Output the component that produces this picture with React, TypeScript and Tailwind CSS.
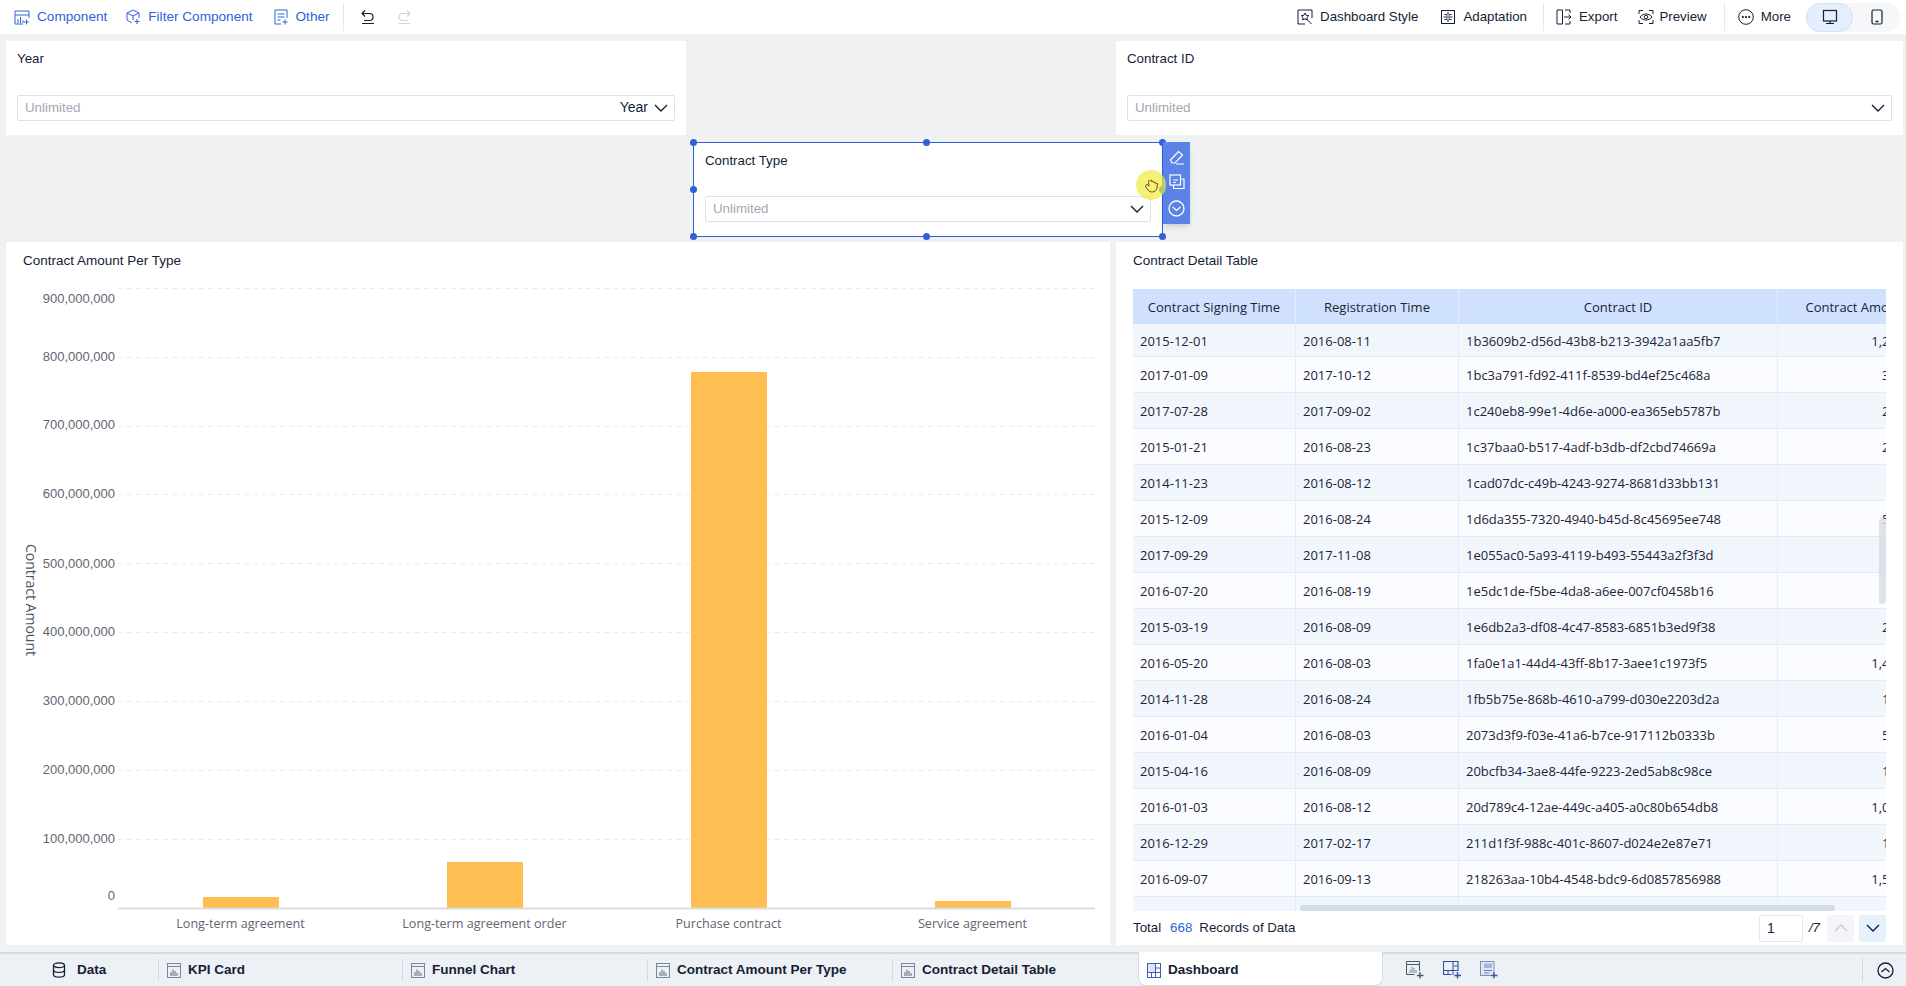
import React from 'react';

const SANS = "font-['Liberation_Sans',Arial,sans-serif]";
const CHART_FONT = "'Open Sans', sans-serif";

type IconProps = { className?: string };

const Svg: React.FC<{ className?: string; size?: number; children: React.ReactNode }> = ({ className, size = 16, children }) => (
  <svg width={size} height={size} viewBox="0 0 16 16" fill="none" stroke="currentColor" strokeWidth="1" className={`shrink-0 ${className ?? ''}`}>
    {children}
  </svg>
);

const ComponentIcon = ({ className }: IconProps) => (
  <Svg className={className}>
    <path d="M15 9V2H1v13h8M1 6h14M4 14v-4M6.500 14V8M9 14v-3M12.500 10.500v5M10 13h5" />
  </Svg>
);
const FilterIcon = ({ className }: IconProps) => (
  <Svg className={className}>
    <path d="M8 1l6 3v5M8 1L2 4v7l5 3M2 4l6 3 6-3M8 7v4M12 10v5M9.500 12.500h5" />
  </Svg>
);
const OtherIcon = ({ className }: IconProps) => (
  <Svg className={className}>
    <path d="M8 15H2V1h12v8M4.500 5h7M4.500 8h7M4.500 11h3M12 10.500v5M9.500 13h5" />
  </Svg>
);
const UndoIcon = ({ className }: IconProps) => (
  <Svg className={className}>
    <path d="M5 1.500L2 4.500l3 3M2 4.500h7.500a3.500 3.500 0 0 1 0 7H4M2 14.500h12" strokeWidth="1.200" />
  </Svg>
);
const RedoIcon = ({ className }: IconProps) => (
  <Svg className={className}>
    <path d="M11 1.500l3 3-3 3M14 4.500H6.500a3.500 3.500 0 0 0 0 7H12M2 14.500h12" strokeWidth="1.200" />
  </Svg>
);
const StyleIcon = ({ className }: IconProps) => (
  <Svg className={className}>
    <path d="M8 15H1V1h14v8M8 4l1.200 2.300 2.600.400-1.900 1.800.5 2.500L8 9.800l-2.400 1.200.5-2.500L4.200 6.700l2.600-.400zM10.500 11l4 4" />
  </Svg>
);
const AdaptIcon = ({ className }: IconProps) => (
  <Svg className={className}>
    <rect x="1.500" y="1.500" width="13" height="13" />
    <path d="M8 3v3.500M8 9.500V13M3.500 8h9M4.500 5.500h2v1M9.500 6.500v-1h2M4.500 10.500h2v-1M9.500 9.500v1h2" />
  </Svg>
);
const ExportIcon = ({ className }: IconProps) => (
  <Svg className={className}>
    <path d="M6.500 1H1v14h5.500V1zM9 1h5v3M9 15h5v-3M8 8h7M12.500 5.500L15 8l-2.500 2.500" />
  </Svg>
);
const PreviewIcon = ({ className }: IconProps) => (
  <Svg className={className}>
    <path d="M1 5V1.500h4M11 1.500h4V5M1 11v3.500h4M11 14.500h4V11M2 8c3-4 9-4 12 0-3 4-9 4-12 0z" />
    <circle cx="8" cy="8" r="1.800" />
  </Svg>
);
const MoreIcon = ({ className }: IconProps) => (
  <Svg className={className}>
    <circle cx="8" cy="8" r="7.300" />
    <circle cx="4.800" cy="8" r=".7" fill="currentColor" />
    <circle cx="8" cy="8" r=".7" fill="currentColor" />
    <circle cx="11.200" cy="8" r=".7" fill="currentColor" />
  </Svg>
);
const MonitorIcon = ({ className }: IconProps) => (
  <Svg className={className}>
    <rect x="1.500" y="1.500" width="13" height="10.500" strokeWidth="1.200" />
    <path d="M8 12v2.500M4 14.500h8" strokeWidth="1.200" />
  </Svg>
);
const PhoneIcon = ({ className }: IconProps) => (
  <Svg className={className}>
    <rect x="3" y="1" width="10" height="14" rx="1.500" strokeWidth="1.200" />
    <path d="M6.500 12.500h3" strokeWidth="1.500" />
  </Svg>
);
const Chevron = ({ className, up }: IconProps & { up?: boolean }) => (
  <svg width="14" height="8" viewBox="0 0 14 8" fill="none" stroke="currentColor" strokeWidth="1.400" className={`shrink-0 ${className ?? ''}`}>
    <path d={up ? 'M1 7l6-6 6 6' : 'M1 1l6 6 6-6'} />
  </svg>
);
const DataIcon = ({ className }: IconProps) => (
  <Svg className={className}>
    <ellipse cx="8" cy="3.200" rx="5.500" ry="2.400" strokeWidth="1.300" />
    <path d="M2.500 3.200v9.600c0 1.300 2.500 2.400 5.500 2.400s5.500-1.100 5.500-2.400V3.200M2.500 8c0 1.300 2.500 2.400 5.500 2.400s5.500-1.100 5.500-2.400" strokeWidth="1.300" />
  </Svg>
);
const TabChartIcon = () => (
  <svg width="14" height="15" viewBox="0 0 14 15" fill="none" className="shrink-0">
    <rect x=".5" y=".5" width="13" height="14" stroke="#7b8698" />
    <path d="M1 3.500h12" stroke="#7b8698" />
    <path d="M4 13V9M6 13V6.500M8 13V8M10 13v-3" stroke="#5d6b82" />
  </svg>
);
const TabDashIcon = () => (
  <svg width="14" height="15" viewBox="0 0 14 15" fill="none" className="shrink-0">
    <rect x=".5" y=".5" width="13" height="14" stroke="#3f5fb4" />
    <rect x="1" y="1" width="7" height="8" fill="#dbe5f9" />
    <path d="M8.500 1v13M1 9.500h12M9 5h4M4.500 10v4" stroke="#3f5fb4" />
  </svg>
);

const AddChartIcon = () => (
  <svg width="18" height="18" viewBox="0 0 18 18" fill="none" className="shrink-0">
    <path d="M13.500 10V.5H.5v13h8" stroke="#4d5a6c" />
    <path d="M1 3.500h12" stroke="#4d5a6c" />
    <path d="M4 12V9M6 12V6M8 12V7M10 12V9" stroke="#93a0b3" strokeWidth="1.300" />
    <path d="M14 11v6.500M11 14.500h6.500" stroke="#4d5a6c" strokeWidth="1.400" />
  </svg>
);
const AddDashIcon = () => (
  <svg width="18" height="18" viewBox="0 0 18 18" fill="none" className="shrink-0">
    <path d="M15 10V.5H.5v13h8" stroke="#2f4ea8" strokeWidth="1.100" />
    <path d="M10 1v13M1 9.500h14M10.500 5h4M5 10v4" stroke="#2f4ea8" />
    <path d="M14.500 11v6.500M11.500 14.500H18" stroke="#2f4ea8" strokeWidth="1.400" />
  </svg>
);
const AddReportIcon = () => (
  <svg width="18" height="18" viewBox="0 0 18 18" fill="none" className="shrink-0">
    <rect x=".5" y=".5" width="13.500" height="14" stroke="#7d8ea8" fill="#dfe6f1" />
    <rect x="4" y="2.500" width="8" height="4.500" fill="#9db6e6" />
    <path d="M4 9.500h8M4 12h5" stroke="#5a7ec8" />
    <path d="M14 11.500v6M11 14.500h6.500" stroke="#3a5aa8" strokeWidth="1.400" />
  </svg>
);

const ToolItem: React.FC<{ icon: React.ReactNode; label: string; className?: string }> = ({ icon, label, className }) => (
  <div className={`flex items-center gap-[7px] ${className ?? ''}`}>
    {icon}
    <span>{label}</span>
  </div>
);

const TopBar = () => (
  <div className={`flex h-[34px] shrink-0 items-center justify-between bg-white ${SANS}`}>
    <div className="flex items-center pl-[14px] text-[13.600px] text-[#2f62d8]">
      <ToolItem icon={<ComponentIcon />} label="Component" />
      <ToolItem icon={<FilterIcon />} label="Filter Component" className="ml-[18px]" />
      <ToolItem icon={<OtherIcon />} label="Other" className="ml-[20px]" />
      <div className="ml-[13px] h-[28px] w-px bg-[#e6e8ec]" />
      <UndoIcon className="ml-[16px] text-[#141e36]" />
      <RedoIcon className="ml-[20px] text-[#cfd6e0]" />
    </div>
    <div className="flex items-center pr-[6px] text-[13.300px] text-[#141e36]">
      <ToolItem icon={<StyleIcon />} label="Dashboard Style" />
      <ToolItem icon={<AdaptIcon />} label="Adaptation" className="ml-[22px]" />
      <div className="ml-[16px] h-[28px] w-px bg-[#e6e8ec]" />
      <ToolItem icon={<ExportIcon />} label="Export" className="ml-[12px]" />
      <div className="ml-[21px] flex items-center gap-[5px]">
        <PreviewIcon />
        <span>Preview</span>
      </div>
      <div className="ml-[17px] h-[28px] w-px bg-[#e6e8ec]" />
      <ToolItem icon={<MoreIcon />} label="More" className="ml-[13px]" />
      <div className="ml-[15px] flex h-[29px] w-[94px] items-center rounded-full bg-[#f6f7f9]">
        <div className="flex h-[29px] w-[47px] items-center justify-center rounded-full border border-[#cfe0fb] bg-[#e4eefd]">
          <MonitorIcon />
        </div>
        <div className="flex w-[47px] items-center justify-center">
          <PhoneIcon />
        </div>
      </div>
    </div>
  </div>
);

const SelectBox: React.FC<{ suffix?: string }> = ({ suffix }) => (
  <div className="flex h-[26px] items-center justify-between rounded-[2px] border border-[#dfe1e6] bg-white pb-[1px] pl-[7px] pr-[6px]">
    <span className="text-[13.300px] text-[#a3a8b3]">Unlimited</span>
    <div className="flex items-center gap-[6px] text-[14px] text-[#141e36]">
      {suffix && <span>{suffix}</span>}
      <Chevron />
    </div>
  </div>
);

const FilterCard: React.FC<{ title: string; suffix?: string }> = ({ title, suffix }) => (
  <div className="flex h-full flex-col justify-between bg-white pb-[14px] pl-[11px] pr-[11px] pt-[10px]">
    <div className="text-[13.300px] leading-[16px] text-[#141e36]">{title}</div>
    <SelectBox suffix={suffix} />
  </div>
);

const handles = [
  'left-[-4px] top-[-4px]',
  'left-[50%] top-[-4px] ml-[-5px]',
  'right-[-4px] top-[-4px]',
  'left-[-4px] top-[50%] mt-[-4px]',
  'right-[-4px] top-[50%] mt-[-4px]',
  'left-[-4px] bottom-[-4px]',
  'left-[50%] bottom-[-4px] ml-[-5px]',
  'right-[-4px] bottom-[-4px]',
];

const SelectedFilter = () => (
  <div className="relative ml-[693px] h-[95px] w-[470px] border border-[#2f62d8]">
    <FilterCard title="Contract Type" />
    {handles.map(h => (
      <span key={h} className={`absolute h-[7px] w-[7px] rounded-full bg-[#2f62d8] ${h}`} />
    ))}
    <div className="absolute left-[469px] top-[-1px] flex h-[82px] w-[27px] flex-col items-center justify-around bg-[#5b82e6] py-[2px] text-white shadow-md">
      <svg width="16" height="16" viewBox="0 0 16 16" fill="none" stroke="currentColor" strokeWidth="1.200">
        <path d="M1.500 11l8-8.500L13.500 6l-7.500 8H3zM7 15h8" />
      </svg>
      <svg width="16" height="16" viewBox="0 0 16 16" fill="none" stroke="currentColor" strokeWidth="1.200">
        <rect x="1" y="1" width="10.500" height="10" />
        <path d="M4.500 11v3.500h10.500V5h-3.500M4 6h5M4 8.500h3" />
      </svg>
      <svg width="17" height="17" viewBox="0 0 17 17" fill="none" stroke="currentColor" strokeWidth="1.300">
        <circle cx="8.500" cy="8.500" r="7.500" />
        <path d="M4.500 7l4 3.500 4-3.500" />
      </svg>
    </div>
    {/* mouse pointer highlight from the recording */}
    <div className="absolute left-[442px] top-[27px] flex h-[30px] w-[30px] items-center justify-center rounded-full bg-[#f0ec3c]/70">
      <svg width="15" height="15" viewBox="0 0 15 15" fill="none" stroke="#7c2d12" strokeWidth="0.900">
        <path d="M2 7c-1 1 0 2.500 2 5 1 1.500 2.500 2 4.500 2s4-1.500 4.500-4l.5-4c0-1-1-1-1.500 0-.2-2-1.500-2.300-2-1-.2-2-1.700-2.300-2.200-1C8.300 2 7 1.800 6.500 3c-.7-1-2-.7-2 .5L5 8 3.500 6.800C3 6.400 2.400 6.500 2 7z" />
      </svg>
    </div>
  </div>
);

const bars = [
  { x: 203, top: 897, label: 'Long-term agreement', cx: 240.500 },
  { x: 447, top: 862, label: 'Long-term agreement order', cx: 484.500 },
  { x: 691, top: 372, label: 'Purchase contract', cx: 728.500 },
  { x: 935, top: 901, label: 'Service agreement', cx: 972.500 },
];

const yTicks = [
  { label: '900,000,000', line: 288, text: 298 },
  { label: '800,000,000', line: 357, text: 356 },
  { label: '700,000,000', line: 426, text: 424 },
  { label: '600,000,000', line: 494, text: 493 },
  { label: '500,000,000', line: 563, text: 563 },
  { label: '400,000,000', line: 632, text: 631 },
  { label: '300,000,000', line: 701, text: 700 },
  { label: '200,000,000', line: 770, text: 769 },
  { label: '100,000,000', line: 839, text: 838 },
  { label: '0', line: 908, text: 895 },
];

// coordinates below are page coordinates, the svg sits at (6,242)
const BarChart = () => (
  <svg width="1104" height="703" viewBox="6 242 1104 703" className="absolute left-0 top-0" fontFamily="'Liberation Sans', Arial, sans-serif">
    {yTicks.slice(0, 9).map(t => (
      <line key={t.label} x1="118" x2="1096" y1={t.line + 0.5} y2={t.line + 0.5} stroke="#ececec" strokeDasharray="5 4" />
    ))}
    {yTicks.map(t => (
      <text key={t.label} x="115" y={t.text + 4.500} textAnchor="end" fontSize="13" fill="#5f6672">{t.label}</text>
    ))}
    <text transform="translate(30 600) rotate(90)" textAnchor="middle" dominantBaseline="middle" fontSize="14" fill="#4b5563" fontFamily={CHART_FONT}>Contract Amount</text>
    {bars.map(b => (
      <rect key={b.label} x={b.x} y={b.top} width="76" height={908 - b.top} fill="#ffbe51" />
    ))}
    <line x1="118" x2="1095" y1="908.500" y2="908.500" stroke="#dcdcdc" strokeWidth="2" />
    {bars.map(b => (
      <text key={b.label} x={b.cx} y="927.500" textAnchor="middle" fontSize="12.600" fill="#5f6672" fontFamily={CHART_FONT}>{b.label}</text>
    ))}
  </svg>
);

const rows = [
  ['2015-12-01', '2016-08-11', '1b3609b2-d56d-43b8-b213-3942a1aa5fb7', '1,253,160'],
  ['2017-01-09', '2017-10-12', '1bc3a791-fd92-411f-8539-bd4ef25c468a', '351,200'],
  ['2017-07-28', '2017-09-02', '1c240eb8-99e1-4d6e-a000-ea365eb5787b', '268,400'],
  ['2015-01-21', '2016-08-23', '1c37baa0-b517-4adf-b3db-df2cbd74669a', '245,900'],
  ['2014-11-23', '2016-08-12', '1cad07dc-c49b-4243-9274-8681d33bb131', '67,300'],
  ['2015-12-09', '2016-08-24', '1d6da355-7320-4940-b45d-8c45695ee748', '512,000'],
  ['2017-09-29', '2017-11-08', '1e055ac0-5a93-4119-b493-55443a2f3f3d', '48,500'],
  ['2016-07-20', '2016-08-19', '1e5dc1de-f5be-4da8-a6ee-007cf0458b16', '72,100'],
  ['2015-03-19', '2016-08-09', '1e6db2a3-df08-4c47-8583-6851b3ed9f38', '230,600'],
  ['2016-05-20', '2016-08-03', '1fa0e1a1-44d4-43ff-8b17-3aee1c1973f5', '1,430,000'],
  ['2014-11-28', '2016-08-24', '1fb5b75e-868b-4610-a799-d030e2203d2a', '125,700'],
  ['2016-01-04', '2016-08-03', '2073d3f9-f03e-41a6-b7ce-917112b0333b', '540,200'],
  ['2015-04-16', '2016-08-09', '20bcfb34-3ae8-44fe-9223-2ed5ab8c98ce', '118,400'],
  ['2016-01-03', '2016-08-12', '20d789c4-12ae-449c-a405-a0c80b654db8', '1,060,000'],
  ['2016-12-29', '2017-02-17', '211d1f3f-988c-401c-8607-d024e2e87e71', '134,800'],
  ['2016-09-07', '2016-09-13', '218263aa-10b4-4548-bdc9-6d0857856988', '1,520,000'],
];

const colWidths = ['w-[163px]', 'w-[163px]', 'w-[319px]', 'w-[160px]'];

const DetailTable = () => (
  <div className="relative h-[622px] w-[753px] overflow-hidden font-['Open_Sans',sans-serif] text-[13px] text-[#1c2438]">
    <div className="flex h-[35px] w-[805px] bg-[#cfe1fc]">
      {['Contract Signing Time', 'Registration Time', 'Contract ID', 'Contract Amount'].map((h, i) => (
        <div key={h} className={`${colWidths[i]} flex shrink-0 items-center justify-center border-r border-[#e3edfc] pt-[2px]`}>{h}</div>
      ))}
    </div>
    {rows.map((r, i) => (
      <div key={r[2]} className={`flex w-[805px] border-b border-[#dfeafb] ${i === 0 ? 'h-[33px]' : 'h-[36px]'} ${i % 2 === 0 ? 'bg-[#f1f6fd]' : 'bg-[#fbfcff]'}`}>
        {r.map((c, j) => (
          <div key={j} className={`${colWidths[j]} flex shrink-0 items-center whitespace-nowrap border-r border-[#e3edfc] px-[7px] pt-[3px] ${j === 3 ? 'justify-end' : ''}`}>{c}</div>
        ))}
      </div>
    ))}
    <div className="flex h-[36px] w-[805px] bg-[#f1f6fd]">
      {colWidths.map(w => <div key={w} className={`${w} shrink-0 border-r border-[#e3edfc]`} />)}
    </div>
    {/* scrollbars */}
    <div className="absolute bottom-0 left-[167px] h-[6px] w-[535px] rounded-full bg-[#d3dbe5]" />
    <div className="absolute right-0 top-[229px] h-[86px] w-[7px] rounded-full bg-[#d7dbe3]/80" />
  </div>
);

const Pager = () => (
  <div className={`flex h-[34px] items-center justify-between pr-[17px] ${SANS} text-[13.300px] text-[#141e36]`}>
    <div className="flex">
      <span>Total</span>
      <span className="ml-[9px] text-[#2f62d8]">668</span>
      <span className="ml-[7px]">Records of Data</span>
    </div>
    <div className="flex items-center">
      <div className="flex h-[27px] w-[44px] items-center rounded-[2px] border border-[#dfeafb] pl-[7px] text-[14px]">1</div>
      <span className="ml-[6px] italic">/7</span>
      <div className="ml-[7px] flex h-[27px] w-[27px] items-center justify-center rounded-[2px] bg-[#f3f5f9] text-[#c5ccd8]"><Chevron up /></div>
      <div className="ml-[5px] flex h-[27px] w-[27px] items-center justify-center rounded-[2px] bg-[#e6f1fd]"><Chevron /></div>
    </div>
  </div>
);

const tabs = [
  { label: 'KPI Card', width: 'w-[244px]' },
  { label: 'Funnel Chart', width: 'w-[245px]' },
  { label: 'Contract Amount Per Type', width: 'w-[245px]' },
  { label: 'Contract Detail Table', width: 'w-[246px]' },
];

const BottomBar = () => (
  <div className={`flex h-[34px] shrink-0 items-stretch border-t-2 border-[#d5dbe2] bg-[#edf1f5] ${SANS} text-[13.500px] font-bold text-[#141e36]`}>
    <div className="flex w-[158px] items-center gap-[10px] pl-[51px]">
      <DataIcon />
      <span>Data</span>
    </div>
    {tabs.map(t => (
      <div key={t.label} className={`flex ${t.width} items-center`}>
        <div className="h-[22px] w-px bg-[#d5dbe2]" />
        <div className="ml-[8px] flex items-center gap-[7px]">
          <TabChartIcon />
          <span>{t.label}</span>
        </div>
      </div>
    ))}
    <div className="mt-[-2px] flex h-[34px] w-[245px] items-center gap-[7px] rounded-b-[8px] border-x border-b border-[#d5dbe2] bg-white pl-[8px] pt-[3px]">
      <TabDashIcon />
      <span>Dashboard</span>
    </div>
    <div className="ml-[23px] flex items-center gap-[19px]">
      <AddChartIcon />
      <AddDashIcon />
      <AddReportIcon />
    </div>
    <div className="ml-auto flex items-center">
      <div className="h-[24px] w-px bg-[#d5dbe2]" />
      <svg width="17" height="17" viewBox="0 0 17 17" fill="none" stroke="#141e36" strokeWidth="1.300" className="ml-[14px] mr-[12px]">
        <circle cx="8.500" cy="8.500" r="7.500" />
        <path d="M4.500 10l4-3.500 4 3.500" />
      </svg>
    </div>
  </div>
);

export default function App() {
  return (
    <div className={`flex h-screen w-full flex-col overflow-hidden bg-[#f0f1f3] ${SANS}`}>
      <TopBar />
      <div className="min-h-0 flex-1">
        <div className="mt-[7px] flex h-[94px] justify-between pl-[6px] pr-[3px]">
          <div className="w-[680px]"><FilterCard title="Year" suffix="Year" /></div>
          <div className="w-[787px]"><FilterCard title="Contract ID" /></div>
        </div>
        <div className="mt-[7px]"><SelectedFilter /></div>
        <div className="mt-[5px] flex h-[703px] justify-between pl-[6px] pr-[3px]">
          <div className="relative w-[1104px] bg-white">
            <div className="pl-[17px] pt-[11px] text-[13.500px] leading-[16px] text-[#141e36]">Contract Amount Per Type</div>
            <BarChart />
          </div>
          <div className="flex w-[787px] flex-col bg-white pl-[17px]">
            <div className="pt-[11px] text-[13.500px] leading-[16px] text-[#141e36]">Contract Detail Table</div>
            <div className="mt-[20px]"><DetailTable /></div>
            <Pager />
          </div>
        </div>
      </div>
      <BottomBar />
    </div>
  );
}
